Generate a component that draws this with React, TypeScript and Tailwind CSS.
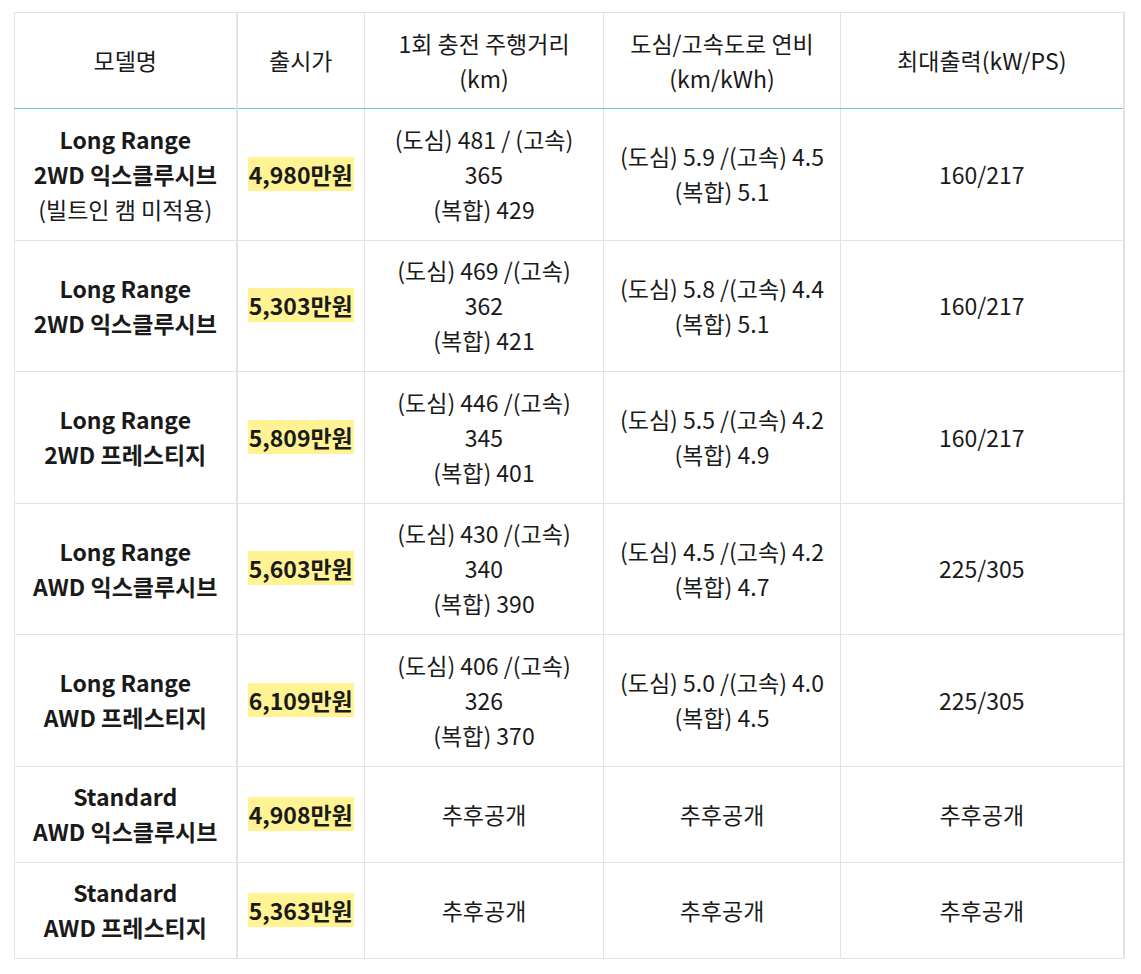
import React from 'react';

type Row = {
  model: string[];
  note?: string;
  price: string;
  range: string[];
  eff: string[];
  power: string;
};

const rows: Row[] = [
  {
    model: ['Long Range', '2WD 익스클루시브'],
    note: '(빌트인 캠 미적용)',
    price: '4,980만원',
    range: ['(도심) 481 / (고속)', '365', '(복합) 429'],
    eff: ['(도심) 5.9 /(고속) 4.5', '(복합) 5.1'],
    power: '160/217',
  },
  {
    model: ['Long Range', '2WD 익스클루시브'],
    price: '5,303만원',
    range: ['(도심) 469 /(고속)', '362', '(복합) 421'],
    eff: ['(도심) 5.8 /(고속) 4.4', '(복합) 5.1'],
    power: '160/217',
  },
  {
    model: ['Long Range', '2WD 프레스티지'],
    price: '5,809만원',
    range: ['(도심) 446 /(고속)', '345', '(복합) 401'],
    eff: ['(도심) 5.5 /(고속) 4.2', '(복합) 4.9'],
    power: '160/217',
  },
  {
    model: ['Long Range', 'AWD 익스클루시브'],
    price: '5,603만원',
    range: ['(도심) 430 /(고속)', '340', '(복합) 390'],
    eff: ['(도심) 4.5 /(고속) 4.2', '(복합) 4.7'],
    power: '225/305',
  },
  {
    model: ['Long Range', 'AWD 프레스티지'],
    price: '6,109만원',
    range: ['(도심) 406 /(고속)', '326', '(복합) 370'],
    eff: ['(도심) 5.0 /(고속) 4.0', '(복합) 4.5'],
    power: '225/305',
  },
  {
    model: ['Standard', 'AWD 익스클루시브'],
    price: '4,908만원',
    range: ['추후공개'],
    eff: ['추후공개'],
    power: '추후공개',
  },
  {
    model: ['Standard', 'AWD 프레스티지'],
    price: '5,363만원',
    range: ['추후공개'],
    eff: ['추후공개'],
    power: '추후공개',
  },
];

function Lines({ lines }: { lines: string[] }) {
  return (
    <>
      {lines.map((l, i) => (
        <div key={i} className="whitespace-nowrap">
          {l}
        </div>
      ))}
    </>
  );
}

const base = 'border border-x-[#e3e3e3] px-1 py-[12px] text-center align-middle';
const head = `${base} font-normal border-t-[#e3e3e3] border-b-[#5ccfd6]`;

export default function App() {
  return (
    <div
      className="bg-white min-h-[974px] pt-3 pl-[14px] text-[23px] leading-[35px] text-[#1a1a1a]"
      style={{ fontFamily: '"Noto Sans CJK KR", "Noto Sans", sans-serif' }}
    >
      <table className="table-fixed border-collapse w-[1109px]">
        <colgroup>
          <col className="w-[222px]" />
          <col className="w-[128px]" />
          <col className="w-[239px]" />
          <col className="w-[237px]" />
          <col className="w-[283px]" />
        </colgroup>
        <thead>
          <tr className="h-[96px]">
            <th className={`${head} border-r-2`}>모델명</th>
            <th className={head}>출시가</th>
            <th className={head}>
              <Lines lines={['1회 충전 주행거리', '(km)']} />
            </th>
            <th className={head}>
              <Lines lines={['도심/고속도로 연비', '(km/kWh)']} />
            </th>
            <th className={`${head} border-r-2`}>최대출력(kW/PS)</th>
          </tr>
        </thead>
        <tbody>
          {rows.map((r, i) => {
            const cell = `${base} border-b-[#e3e3e3] ${
              i === 0 ? 'border-t-[#5ccfd6]' : 'border-t-[#e3e3e3]'
            }`;
            return (
              <tr key={i} className={r.range.length > 1 ? 'h-[131.5px]' : 'h-[96px]'}>
                <td className={`${cell} border-r-2`}>
                  <div className="font-bold">
                    <Lines lines={r.model} />
                  </div>
                  {r.note && <div className="whitespace-nowrap">{r.note}</div>}
                </td>
                <td className={`${cell} font-bold`}>
                  <span className="bg-[#fff394] px-px">{r.price}</span>
                </td>
                <td className={cell}>
                  <Lines lines={r.range} />
                </td>
                <td className={cell}>
                  <Lines lines={r.eff} />
                </td>
                <td className={`${cell} border-r-2`}>{r.power}</td>
              </tr>
            );
          })}
        </tbody>
      </table>
    </div>
  );
}
